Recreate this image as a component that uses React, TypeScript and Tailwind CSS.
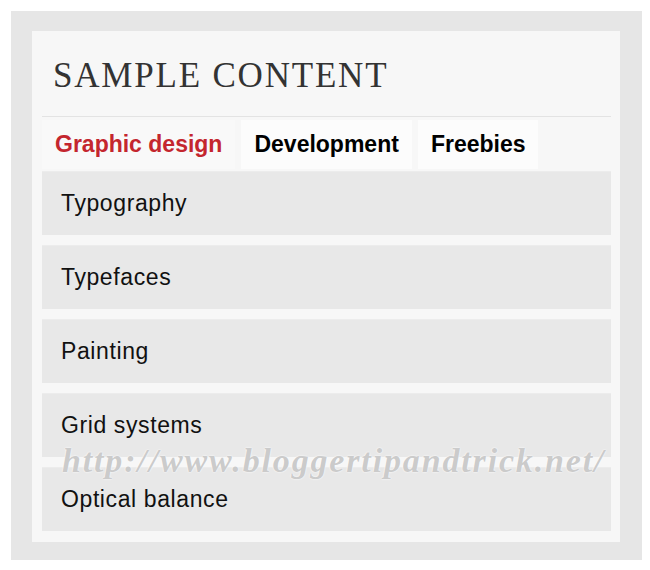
import React from 'react';

const tabs = ['Graphic design', 'Development', 'Freebies'];
const items = ['Typography', 'Typefaces', 'Painting', 'Grid systems', 'Optical balance'];

export default function App() {
  return (
    <div className="w-[650px] h-[570px] bg-white pt-[11px] pl-[11px]">
      {/* outer gray frame */}
      <div className="w-[631px] h-[549px] bg-[#e6e6e6] pt-[20px] pl-[21px]">
        {/* panel */}
        <div className="relative w-[588px] h-[511px] bg-[#f7f7f7] pt-[27px] px-[10px]">
          <h2
            className="pl-[11px] text-[35px] leading-[36px] tracking-[1.8px] text-[#333] font-normal"
            style={{ fontFamily: '"Liberation Serif", "DejaVu Serif", serif' }}
          >
            SAMPLE CONTENT
          </h2>
          <div className="mt-[22px] h-px w-[569px] bg-[#e3e3e3]" />

          <div className="mt-[3px] mb-[2px] flex gap-[6px]" style={{ fontFamily: '"Liberation Sans", Arial, sans-serif' }}>
            {tabs.map((t, i) => (
              <div
                key={t}
                className={
                  i === 0
                    ? 'h-[49px] px-[13px] flex items-center text-[23px] font-bold text-[#c4262e] bg-[#f9f9f9]'
                    : 'h-[49px] px-[13px] flex items-center text-[23px] font-bold text-black bg-[#fcfcfc]'
                }
              >
                {t}
              </div>
            ))}
          </div>

          <div className="flex flex-col gap-[10px] w-[569px]" style={{ fontFamily: '"Liberation Sans", Arial, sans-serif' }}>
            {items.map((it) => (
              <div
                key={it}
                className="h-[64px] bg-[#e8e8e8] border-t border-[#ececec] pl-[19px] flex items-center text-[23px] tracking-[0.6px] text-[#111]"
              >
                {it}
              </div>
            ))}
          </div>

          {/* watermark */}
          <div
            className="absolute left-[30px] top-[404px] text-[34px] italic font-bold tracking-[1.85px] text-[#cbcbcb] whitespace-nowrap pointer-events-none"
            style={{ fontFamily: '"Liberation Serif", serif', textShadow: '0 0 2px #fff, 0 0 1px #fff' }}
          >
            http://www.bloggertipandtrick.net/
          </div>
        </div>
      </div>
    </div>
  );
}
